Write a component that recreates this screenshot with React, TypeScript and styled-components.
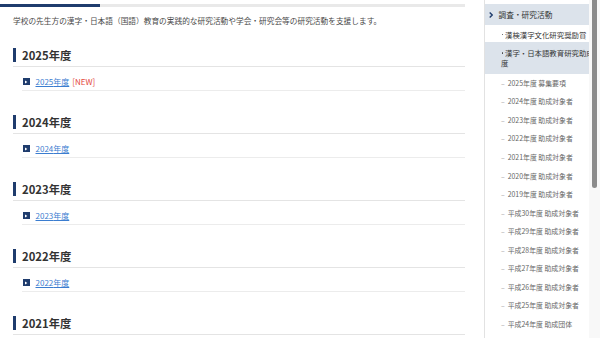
import React from "react";
import styled, { createGlobalStyle } from "styled-components";

const Global = createGlobalStyle`
  html, body { margin: 0; padding: 0; background: #fff; }
  body { font-family: "Noto Sans CJK JP", "Noto Sans", sans-serif; overflow: hidden; }
  * { box-sizing: border-box; }
`;

const Page = styled.div`
  display: flex;
  width: 600px;
  height: 338px;
  overflow: hidden;
`;

const Main = styled.main`
  width: 465px;
  flex-shrink: 0;
  margin-right: 19px;
`;

const TopBar = styled.div`
  margin-top: 4px;
  height: 2.5px;
  background: linear-gradient(to right, #1f3c6d 0, #1f3c6d 100px, #e9e9e9 100px);
`;

const Content = styled.div`
  padding-left: 13px;
`;

const Intro = styled.p`
  margin: 9px 0 0;
  font-size: 7.7px;
  line-height: 10px;
  color: #4a4a4a;
  white-space: nowrap;
`;

const Section = styled.section<{ $first?: boolean }>`
  margin-top: ${(p) => (p.$first ? "22px" : "24px")};
`;

const Heading = styled.h2`
  margin: 0;
  padding-bottom: 4px;
  border-bottom: 1.5px solid #e4e4e4;
`;

const HeadingText = styled.span`
  display: flex;
  align-items: center;
  height: 14px;
  border-left: 3px solid #1f3c6d;
  padding-left: 6px;
  font-size: 11.3px;
  font-weight: 700;
  color: #333;
  line-height: 14px;
`;

const LinkRow = styled.div`
  margin-left: 9px;
  padding: 10px 0 3px 1px;
  display: flex;
  align-items: center;
  gap: 6px;
  line-height: 10px;
  border-bottom: 1px solid #ececec;
`;

const Icon = styled.span`
  width: 6.5px;
  height: 6.5px;
  background: #1f3c6d;
  display: inline-flex;
  align-items: center;
  justify-content: center;
`;

const Link = styled.a`
  font-size: 8px;
  color: #3b7dd0;
  text-decoration: underline;
`;

const New = styled.span`
  font-size: 8px;
  color: #e4463c;
  margin-left: -3px;
`;

const Sidebar = styled.aside`
  width: 105px;
  flex-shrink: 0;
  border-left: 1.5px solid #e2e2e2;
  overflow: hidden;
  padding-top: 3.5px;
`;

const NavList = styled.ul`
  list-style: none;
  margin: 0;
  padding: 0;
  width: 122px;
`;

const TopItem = styled.li`
  display: flex;
  align-items: center;
  gap: 5.5px;
  padding: 6px 0 5px 4px;
  background: #dce3eb;
  font-size: 7.7px;
  line-height: 10px;
  color: #333;
`;

const Item = styled.li<{ $active?: boolean }>`
  padding: ${(p) => (p.$active ? "6.5px 2px 5.5px 16px" : "5px 2px 2px 16px")};
  background: ${(p) => (p.$active ? "#dce3eb" : "#fff")};
  font-size: 7.4px;
  line-height: 10px;
  color: #333;
`;

const Bullet = styled.span`
  display: inline-block;
  width: 4px;
  height: 10px;
  vertical-align: top;
  position: relative;
  &::before {
    content: "";
    position: absolute;
    left: 0.5px;
    top: 4.3px;
    width: 1.6px;
    height: 1.6px;
    border-radius: 50%;
    background: #444;
  }
`;

const SubItem = styled.li`
  display: flex;
  align-items: center;
  height: 18.55px;
  padding-left: 16px;
  font-size: 6.9px;
  color: #666;
  white-space: nowrap;
`;

const Dash = styled.span`
  color: #999;
  margin-right: 3px;
`;

const ScrollTrack = styled.div`
  width: 11px;
  flex-shrink: 0;
  background: #f8f8f8;
  padding-left: 2.5px;
`;

const Thumb = styled.div`
  width: 5.5px;
  height: 188px;
  background: #8b8b8b;
  border-radius: 0 0 3px 3px;
`;

const years = ["2025", "2024", "2023", "2022", "2021"];

const subs = [
  "2025年度 募集要項",
  "2024年度 助成対象者",
  "2023年度 助成対象者",
  "2022年度 助成対象者",
  "2021年度 助成対象者",
  "2020年度 助成対象者",
  "2019年度 助成対象者",
  "平成30年度 助成対象者",
  "平成29年度 助成対象者",
  "平成28年度 助成対象者",
  "平成27年度 助成対象者",
  "平成26年度 助成対象者",
  "平成25年度 助成対象者",
  "平成24年度 助成団体",
];

const PlayIcon = () => (
  <Icon>
    <svg width="4" height="4" viewBox="0 0 4 4">
      <path d="M1 0.6 L3.4 2 L1 3.4 Z" fill="#fff" />
    </svg>
  </Icon>
);

const Chevron = () => (
  <svg width="4" height="6" viewBox="0 0 4 6">
    <path d="M0.7 0.6 L3.2 3 L0.7 5.4" stroke="#1f3c6d" strokeWidth="1.4" fill="none" />
  </svg>
);

export default function App() {
  return (
    <>
      <Global />
      <Page>
        <Main>
          <TopBar />
          <Content>
            <Intro>
              学校の先生方の漢字・日本語（国語）教育の実践的な研究活動や学会・研究会等の研究活動を支援します。
            </Intro>
            {years.map((y, i) => (
              <Section key={y} $first={i === 0}>
                <Heading>
                  <HeadingText>{y}年度</HeadingText>
                </Heading>
                <LinkRow>
                  <PlayIcon />
                  <Link href="#">{y}年度</Link>
                  {i === 0 && <New>[NEW]</New>}
                </LinkRow>
              </Section>
            ))}
          </Content>
        </Main>
        <Sidebar>
          <NavList>
            <TopItem>
              <Chevron />
              <span>調査・研究活動</span>
            </TopItem>
            <Item>
              <Bullet />
              漢検漢字文化研究奨励賞
            </Item>
            <Item $active>
              <Bullet />
              漢字・日本語教育研究助成制度
            </Item>
            {subs.map((s) => (
              <SubItem key={s}>
                <Dash>–</Dash>
                {s}
              </SubItem>
            ))}
          </NavList>
        </Sidebar>
        <ScrollTrack>
          <Thumb />
        </ScrollTrack>
      </Page>
    </>
  );
}
